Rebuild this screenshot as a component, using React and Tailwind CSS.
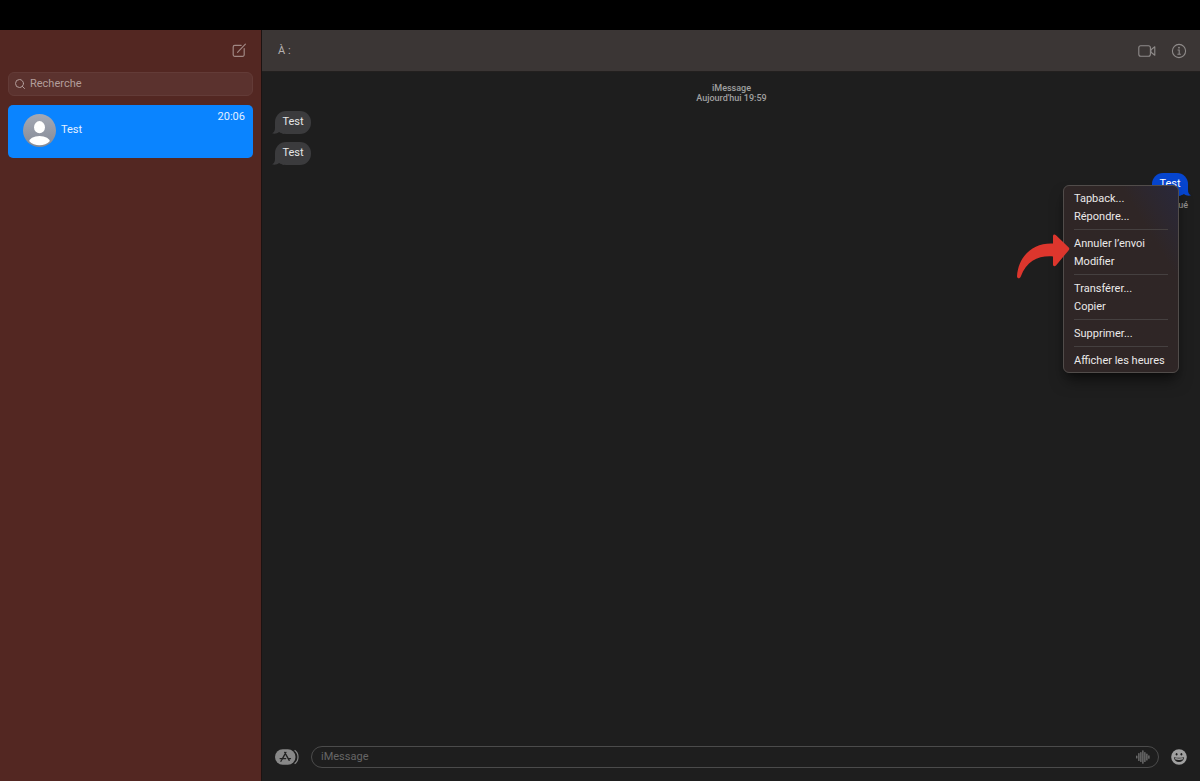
import { Search } from "lucide-react";

const MESSAGES = [
  { id: 1, text: "Test" },
  { id: 2, text: "Test" },
];

const MENU = [
  ["Tapback...", "Répondre..."],
  ["Annuler l’envoi", "Modifier"],
  ["Transférer...", "Copier"],
  ["Supprimer..."],
  ["Afficher les heures"],
];

function ComposeIcon() {
  return (
    <svg width="16" height="16" viewBox="0 0 16 16" fill="none" stroke="#a08783" strokeWidth="1.2" strokeLinecap="round" strokeLinejoin="round">
      <path d="M10.2 2.3H3.8a1.6 1.6 0 0 0-1.6 1.6v7.8a1.6 1.6 0 0 0 1.6 1.6h7.8a1.6 1.6 0 0 0 1.6-1.6V5.6" />
      <path d="M7.2 8.6 14.4 1.2M7 8.9l-.4.4" />
    </svg>
  );
}

function VideoIcon() {
  return (
    <svg width="18" height="12" viewBox="0 0 18 12" fill="none" stroke="#8f8b8a" strokeWidth="1.1" strokeLinejoin="round">
      <rect x="0.8" y="0.8" width="11.6" height="10.4" rx="2" />
      <path d="M13 4.7 16.8 1.8v8.4l-3.8-2.9z" />
    </svg>
  );
}

function InfoIcon() {
  return (
    <svg width="16" height="16" viewBox="0 0 16 16" fill="none" stroke="#8f8b8a" strokeWidth="1.1">
      <circle cx="8" cy="8" r="6.6" />
      <path d="M6.6 7h1.6v4M6.4 11.2h3.4" />
      <circle cx="8" cy="4.7" r="0.9" fill="#8f8b8a" stroke="none" />
    </svg>
  );
}

function Avatar() {
  return (
    <svg className="shrink-0" width="33" height="33" viewBox="0 0 33 33">
      <defs>
        <linearGradient id="avatar" x1="0" y1="0" x2="0" y2="1">
          <stop offset="0" stopColor="#a4a9b5" />
          <stop offset="1" stopColor="#858a96" />
        </linearGradient>
        <clipPath id="avatar-clip">
          <circle cx="16.5" cy="16.5" r="14.8" />
        </clipPath>
      </defs>
      <circle cx="16.5" cy="16.5" r="16.5" fill="url(#avatar)" />
      <ellipse cx="16.5" cy="13.2" rx="5.5" ry="6.1" fill="#fff" />
      <ellipse cx="16.5" cy="28" rx="10.6" ry="6" fill="#fff" clipPath="url(#avatar-clip)" />
    </svg>
  );
}

function AppsIcon() {
  return (
    <svg width="24" height="16" viewBox="0 0 24 16" fill="none">
      <rect x="0" y="0.3" width="20.5" height="15.4" rx="7.7" fill="#888888" />
      <path d="M19.6 1.2c2 1.4 3.4 4 3.4 6.800s-1.400 5.400-3.400 6.800" stroke="#888888" strokeWidth="1.2" />
      <path d="M10.9 3.4 6.9 10.6M9.7 3.4l4.5 8M5.1 9.6h5.6M13 9.6h2.5M6.3 11.6l-.4.7" stroke="#222" strokeWidth="1.3" strokeLinecap="round" />
    </svg>
  );
}

function WaveIcon() {
  return (
    <svg className="shrink-0" width="14" height="14" viewBox="0 0 14 14" stroke="#858585" strokeWidth="1.1" strokeLinecap="round">
      <path d="M.8 6v2M2.9 3.500v7M4.9 2.500v9M6.9 .8v12.4M8.9 2.500v9M10.9 4v6M12.9 5.800v2.400" />
    </svg>
  );
}

function SmileIcon() {
  return (
    <svg width="16" height="16" viewBox="0 0 16 16">
      <circle cx="8" cy="8" r="7.8" fill="#a0a0a0" />
      <ellipse cx="5.6" cy="5.2" rx="0.9" ry="1.3" fill="#202020" />
      <ellipse cx="10.4" cy="5.2" rx="0.9" ry="1.3" fill="#202020" />
      <path d="M2.9 8.2c3 .8 7.2.8 10.2 0-.2 2.8-2.3 4.8-5.1 4.8s-4.9-2-5.1-4.8z" fill="#202020" />
      <path d="M3.9 9.1c2.5.6 5.7.6 8.2 0l-.5 1.4c-2.2.5-5 .5-7.2 0z" fill="#a0a0a0" />
    </svg>
  );
}

function Arrow() {
  return (
    <svg width="55" height="48" viewBox="0 0 55 48" className="pointer-events-none absolute top-[60px] right-[118px]">
      <path
        d="M38 10.500V3.500C38 1.500 39.500 1 41 2.300L53.500 14.200C54.600 15.300 54.600 16.300 53.500 17.400L41 32.500C39.500 33.800 38 33.300 38 31.500V23.500C24 22.500 12 27 5.800 43.500C5 46 2.200 46 2 43.200C3.500 22 19 9.500 38 10.500Z"
        fill="#dd362d"
      />
    </svg>
  );
}

function Bubble({ text, mine }) {
  return (
    <div
      className={`relative flex h-[23px] w-9 items-center justify-center rounded-[11px] text-[11px] ${
        mine ? "bg-[#0645cf] text-white" : "bg-[#3b3b3d] text-[#e6e6e6]"
      }`}
    >
      <svg
        width="12"
        height="12"
        viewBox="0 0 12 12"
        className={mine ? "absolute -right-[3px] bottom-0 -scale-x-100" : "absolute bottom-0 -left-[3px]"}
      >
        <path d="M3 0V5.5C3 8.8 2.2 10.4 0 11.3C2.5 12.3 5.4 11.4 7 10L12 12V0Z" fill={mine ? "#0645cf" : "#3b3b3d"} />
      </svg>
      <span className="relative">{text}</span>
    </div>
  );
}

function ContextMenu() {
  return (
    <div
      role="menu"
      className="absolute top-3 right-[9px] w-[116px] rounded-md border border-[#514c4a] bg-[#2f2626] bg-linear-to-bl from-[#29283b] to-[#2f2626] to-25% py-[3px] shadow-lg shadow-black/50"
    >
      {MENU.map((group, i) => (
        <div key={group[0]}>
          {i > 0 && <hr className="mx-2.5 my-1 border-[#454040]" />}
          {group.map((label) => (
            <button key={label} role="menuitem" className="block h-[18px] w-full pl-2.5 text-left text-[11px] leading-[19px] whitespace-nowrap text-[#ebe9e9]">
              {label}
            </button>
          ))}
        </div>
      ))}
    </div>
  );
}

function Sidebar() {
  return (
    <aside className="w-[262px] shrink-0 border-r border-[#1c1312] bg-[#532722] px-2">
      <div className="flex h-[42px] items-center justify-end pr-1.5">
        <button aria-label="Nouveau message">
          <ComposeIcon />
        </button>
      </div>
      <label className="flex h-6 items-center gap-1 rounded-md border border-[#633b37] bg-[#5b322e] px-[5px] text-[#b39d9a]">
        <Search size={12} strokeWidth={2} className="shrink-0" />
        <input
          type="search"
          aria-label="Recherche"
          placeholder="Recherche"
          className="w-full min-w-0 bg-transparent pt-px text-[11px] outline-none placeholder:text-[#b39d9a]"
        />
      </label>
      <button className="mt-[9px] flex h-[53px] w-full rounded-[5px] bg-[#0a84ff] pr-2 pl-[15px] text-left text-[11px] leading-4 text-[#e3f0ff]">
        <span className="flex flex-1 gap-[5px] pt-[9px]">
          <Avatar />
          <span className="pt-2">Test</span>
        </span>
        <time className="mt-1">20:06</time>
      </button>
    </aside>
  );
}

export default function App() {
  return (
    <div className="flex min-h-screen flex-col bg-black pt-[30px] font-[Roboto,'Liberation_Sans',sans-serif]">
      <div className="flex flex-1">
        <Sidebar />
        <main className="flex min-w-0 flex-1 flex-col bg-[#1e1e1e]">
          {/* Recipient bar */}
          <header className="flex h-[42px] items-center justify-between border-b border-black/40 bg-[#3b3635] pr-[13px] pl-4">
            <span className="pt-px text-[11px] text-[#b5b1b0]">À :</span>
            <div className="flex items-center gap-[15px]">
              <button aria-label="FaceTime">
                <VideoIcon />
              </button>
              <button aria-label="Détails">
                <InfoIcon />
              </button>
            </div>
          </header>

          {/* Conversation */}
          <section className="flex flex-1 flex-col items-start gap-2 pt-[11px] pr-3 pl-[13px]">
            <p className="w-full text-center text-[9px] leading-[10px] font-medium text-[#a0a0a0]">
              iMessage
              <br />
              Aujourd'hui 19:59
            </p>
            {MESSAGES.map((m) => (
              <Bubble key={m.id} text={m.text} />
            ))}
            <div className="relative flex flex-col items-end gap-1 self-end">
              <Bubble text="Test" mine />
              <span className="text-[9px] leading-[10px] font-medium text-[#909090]">Distribué</span>
              <ContextMenu />
              <Arrow />
            </div>
          </section>

          {/* Composer */}
          <footer className="flex items-center gap-3 px-[13px] pb-[13px]">
            <button aria-label="Apps">
              <AppsIcon />
            </button>
            <label className="flex h-[22px] flex-1 items-center rounded-full border border-[#4b4b4b] pr-2 pl-[9px]">
              <input
                type="text"
                aria-label="iMessage"
                placeholder="iMessage"
                className="w-full min-w-0 bg-transparent pt-px text-[11px] outline-none placeholder:text-[#666666]"
              />
              <WaveIcon />
            </label>
            <button aria-label="Emoji">
              <SmileIcon />
            </button>
          </footer>
        </main>
      </div>
    </div>
  );
}
